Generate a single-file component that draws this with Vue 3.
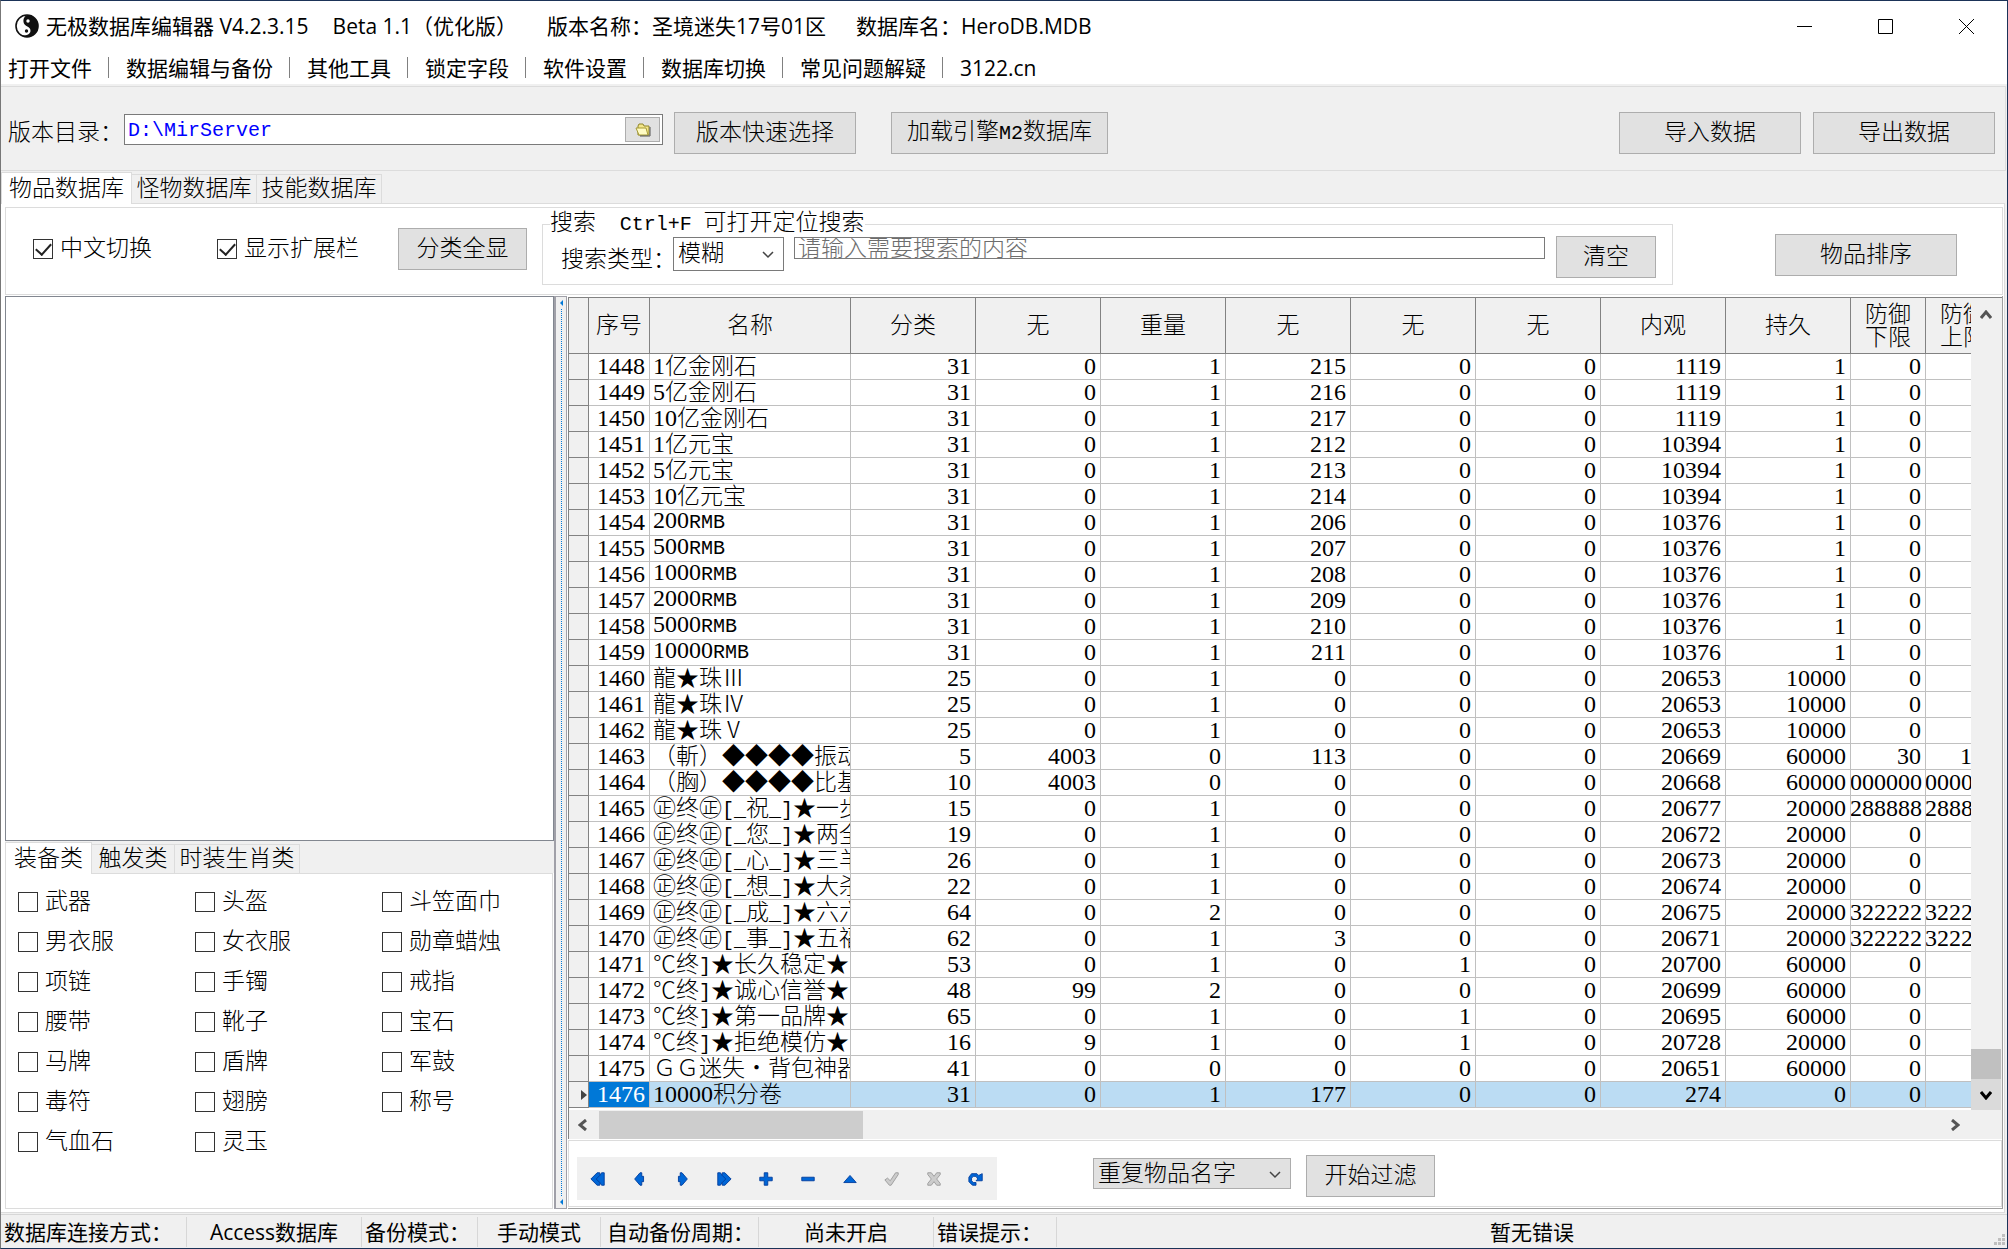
<script setup>
import { ref } from "vue";

const menus = ["打开文件", "数据编辑与备份", "其他工具", "锁定字段", "软件设置", "数据库切换", "常见问题解疑", "3122.cn"];
const mainTabs = ["物品数据库", "怪物数据库", "技能数据库"];
const kindTabs = ["装备类", "触发类", "时装生肖类"];
const kinds = [
  "武器", "头盔", "斗笠面巾",
  "男衣服", "女衣服", "勋章蜡烛",
  "项链", "手镯", "戒指",
  "腰带", "靴子", "宝石",
  "马牌", "盾牌", "军鼓",
  "毒符", "翅膀", "称号",
  "气血石", "灵玉",
];

const columns = ["序号", "名称", "分类", "无", "重量", "无", "无", "无", "内观", "持久", "防御\n下限", "防御\n上限"];

const rows = [
  [1448, "1亿金刚石", 31, 0, 1, 215, 0, 0, 1119, 1, 0, ""],
  [1449, "5亿金刚石", 31, 0, 1, 216, 0, 0, 1119, 1, 0, ""],
  [1450, "10亿金刚石", 31, 0, 1, 217, 0, 0, 1119, 1, 0, ""],
  [1451, "1亿元宝", 31, 0, 1, 212, 0, 0, 10394, 1, 0, ""],
  [1452, "5亿元宝", 31, 0, 1, 213, 0, 0, 10394, 1, 0, ""],
  [1453, "10亿元宝", 31, 0, 1, 214, 0, 0, 10394, 1, 0, ""],
  [1454, "200RMB", 31, 0, 1, 206, 0, 0, 10376, 1, 0, ""],
  [1455, "500RMB", 31, 0, 1, 207, 0, 0, 10376, 1, 0, ""],
  [1456, "1000RMB", 31, 0, 1, 208, 0, 0, 10376, 1, 0, ""],
  [1457, "2000RMB", 31, 0, 1, 209, 0, 0, 10376, 1, 0, ""],
  [1458, "5000RMB", 31, 0, 1, 210, 0, 0, 10376, 1, 0, ""],
  [1459, "10000RMB", 31, 0, 1, 211, 0, 0, 10376, 1, 0, ""],
  [1460, "龍★珠Ⅲ", 25, 0, 1, 0, 0, 0, 20653, 10000, 0, ""],
  [1461, "龍★珠Ⅳ", 25, 0, 1, 0, 0, 0, 20653, 10000, 0, ""],
  [1462, "龍★珠Ⅴ", 25, 0, 1, 0, 0, 0, 20653, 10000, 0, ""],
  [1463, "（斬）◆◆◆◆振动", 5, 4003, 0, 113, 0, 0, 20669, 60000, 30, 100],
  [1464, "（胸）◆◆◆◆比基", 10, 4003, 0, 0, 0, 0, 20668, 60000, 1000000, 1000000],
  [1465, "㊣终㊣[_祝_]★一步", 15, 0, 1, 0, 0, 0, 20677, 20000, 288888, 288888],
  [1466, "㊣终㊣[_您_]★两全", 19, 0, 1, 0, 0, 0, 20672, 20000, 0, ""],
  [1467, "㊣终㊣[_心_]★三羊", 26, 0, 1, 0, 0, 0, 20673, 20000, 0, ""],
  [1468, "㊣终㊣[_想_]★大杀", 22, 0, 1, 0, 0, 0, 20674, 20000, 0, ""],
  [1469, "㊣终㊣[_成_]★六六", 64, 0, 2, 0, 0, 0, 20675, 20000, 322222, 322222],
  [1470, "㊣终㊣[_事_]★五福", 62, 0, 1, 3, 0, 0, 20671, 20000, 322222, 322222],
  [1471, "℃终]★长久稳定★", 53, 0, 1, 0, 1, 0, 20700, 60000, 0, ""],
  [1472, "℃终]★诚心信誉★", 48, 99, 2, 0, 0, 0, 20699, 60000, 0, ""],
  [1473, "℃终]★第一品牌★", 65, 0, 1, 0, 1, 0, 20695, 60000, 0, ""],
  [1474, "℃终]★拒绝模仿★", 16, 9, 1, 0, 1, 0, 20728, 20000, 0, ""],
  [1475, "ＧＧ迷失・背包神器", 41, 0, 0, 0, 0, 0, 20651, 60000, 0, ""],
  [1476, "10000积分卷", 31, 0, 1, 177, 0, 0, 274, 0, 0, ""],
];

const current = ref(1476);
const dir = ref("D:\\MirServer");
const keyword = ref("");
const chinese = ref(true);
const extended = ref(true);
const checked = ref([]);

const navButtons = [
  { name: "首条", d: "M11 2v3l2-3h3v14h-3l-2-3v3H8L1 9l7-7z", line: "M11 5L7 9l4 4" },
  { name: "上一条", d: "M9 2h2v4h2v6h-2v4H9L3 9z" },
  { name: "下一条", d: "M9 2H7v4H5v6h2v4h2l6-7z" },
  { name: "末条", d: "M7 2v3L5 2H2v14h3l2-3v3h3l7-7-7-7z", line: "M7 5l4 4-4 4" },
  { name: "添加", d: "M7 2h4v5h5v4h-5v5H7v-5H2V7h5z" },
  { name: "删除", d: "M2 7h14v4H2z" },
  { name: "编辑", d: "M2 13h14L9 5z" },
  { name: "提交", d: "M1 10l3-2 3 3 6-9h3v2L8 16H6z", off: true },
  { name: "取消", d: "M2 2h4l3 4 3-4h4v2l-4 5 4 5v2h-4l-3-4-3 4H2v-2l4-5-4-5z", off: true },
  { name: "刷新", d: "M9 16H5l-4-4V7l3-4h6l2 2 4-2v8H9l2-2-2-3H6L4 8v3l2 2h3z" },
];

const status = [
  { text: "数据库连接方式：", cls: "w-a" },
  { text: "Access数据库", cls: "w-b center" },
  { text: "备份模式：", cls: "w-c" },
  { text: "手动模式", cls: "w-d center" },
  { text: "自动备份周期：", cls: "w-e" },
  { text: "尚未开启", cls: "w-f center" },
  { text: "错误提示：", cls: "w-g" },
  { text: "暂无错误", cls: "w-h center" },
];

// split a name into digit, latin and wide runs so each gets its own face
function runs(name) {
  return name.match(/[0-9]+|[\x21-\x2f\x3a-\x7e]+|[^\x21-\x7e]+/g).map((text) => ({
    text,
    cls: /[0-9]/.test(text) ? "run-digit" : /[\x21-\x7e]/.test(text) ? "run-latin" : "run-wide",
  }));
}
</script>

<template>
  <div class="window">
    <header class="titlebar">
      <svg class="logo" viewBox="0 0 24 24" aria-hidden="true">
        <circle cx="12" cy="12" r="11" fill="#fff" stroke="#111" stroke-width="1.6" />
        <path d="M12 1a11 11 0 0 1 0 22c-2 0-4-.6-5.600-1.600C10 22 15 21 15.500 17 16 12 9 13 8.500 8 8.200 4 10 2 12 1z" fill="#111" />
        <circle cx="13" cy="7" r="1.700" fill="#fff" />
        <circle cx="11.500" cy="17" r="1.700" fill="#111" />
      </svg>
      <h1 class="title">
        <span>无极数据库编辑器 V4.2.3.15</span>
        <span class="title-beta">Beta 1.1（优化版）</span>
        <span class="title-version">版本名称：圣境迷失17号01区</span>
        <span>数据库名：HeroDB.MDB</span>
      </h1>
      <div class="win-buttons">
        <button type="button" aria-label="最小化"><svg viewBox="0 0 15 15"><path d="M0 7.500h15" /></svg></button>
        <button type="button" aria-label="最大化"><svg viewBox="0 0 15 15"><path d="M.5.5h14v14H.5z" /></svg></button>
        <button type="button" aria-label="关闭"><svg viewBox="0 0 15 15"><path d="M0 0l15 15M15 0L0 15" /></svg></button>
      </div>
    </header>

    <nav class="menubar">
      <template v-for="(m, i) in menus" :key="m">
        <i v-if="i" class="menu-sep"></i>
        <button type="button">{{ m }}</button>
      </template>
    </nav>

    <section class="path-panel">
      <label for="dir">版本目录：</label>
      <div class="dir-box">
        <input id="dir" v-model="dir" type="text">
        <button type="button" class="dir-open" aria-label="浏览">
          <svg viewBox="0 0 16 14">
            <path d="M3 12V3l1-2h4l1 2h5v9z" fill="#f3e68a" stroke="#8f8428" />
            <path d="M1 5h10l2 7H4z" fill="#fffbc4" stroke="#a59a35" />
            <path d="M15 4v9H5" fill="none" stroke="#555" />
          </svg>
        </button>
      </div>
      <button type="button" class="btn btn-wide">版本快速选择</button>
      <button type="button" class="btn btn-load">加载引擎<span class="run-latin">M2</span>数据库</button>
      <button type="button" class="btn btn-wide push">导入数据</button>
      <button type="button" class="btn btn-wide btn-export">导出数据</button>
    </section>

    <div class="tabs main-tabs" role="tablist">
      <button v-for="(t, i) in mainTabs" :key="t" type="button" role="tab" :class="{ active: i === 0 }">{{ t }}</button>
    </div>

    <main class="page">
      <section class="toolbar">
        <label class="check check-first"><input v-model="chinese" type="checkbox">中文切换</label>
        <label class="check check-second"><input v-model="extended" type="checkbox">显示扩展栏</label>
        <button type="button" class="btn btn-all">分类全显</button>
        <fieldset class="search">
          <legend>搜索 <span class="hotkey">Ctrl+F</span> 可打开定位搜索</legend>
          <div class="search-row">
            <label for="mode">搜索类型：</label>
            <div class="select mode">
              <select id="mode"><option>模糊</option></select>
              <svg viewBox="0 0 12 8"><path d="M1 1l5 5 5-5" /></svg>
            </div>
            <input v-model="keyword" class="keyword" type="text" aria-label="搜索内容" placeholder="请输入需要搜索的内容">
            <button type="button" class="btn btn-clear">清空</button>
          </div>
        </fieldset>
        <button type="button" class="btn btn-wide btn-sort">物品排序</button>
      </section>

      <div class="split">
        <aside class="left">
          <div class="list"></div>
          <div class="tabs kind-tabs" role="tablist">
            <button v-for="(t, i) in kindTabs" :key="t" type="button" role="tab" :class="{ active: i === 0 }">{{ t }}</button>
          </div>
          <div class="kinds">
            <label v-for="k in kinds" :key="k" class="check">
              <input v-model="checked" type="checkbox" :value="k">{{ k }}
            </label>
          </div>
        </aside>

        <div class="splitter">
          <i class="split-arrow"></i>
          <i class="split-dots"></i>
          <i class="split-arrow"></i>
        </div>

        <section class="right">
          <div class="grid">
            <div class="grid-view">
              <table>
                <colgroup>
                  <col class="c-mark"><col class="c-id"><col class="c-name">
                  <col v-for="n in 8" :key="n" class="c-num">
                  <col class="c-def"><col class="c-def">
                </colgroup>
                <thead>
                  <tr>
                    <th></th>
                    <th v-for="(c, i) in columns" :key="i">{{ c }}</th>
                  </tr>
                </thead>
                <tbody>
                  <tr v-for="r in rows" :key="r[0]" :class="{ current: r[0] === current }" @click="current = r[0]">
                    <td class="mark"><i v-if="r[0] === current"></i></td>
                    <td class="num id">{{ r[0] }}</td>
                    <td><div class="name"><span v-for="(s, i) in runs(r[1])" :key="i" :class="s.cls">{{ s.text }}</span></div></td>
                    <td v-for="(v, i) in r.slice(2)" :key="i" class="num">{{ v }}</td>
                  </tr>
                </tbody>
              </table>
            </div>
            <div class="vscroll">
              <svg class="arrow up" viewBox="0 0 12 10"><path d="M1 8l5-6 5 6" /></svg>
              <i class="vthumb"></i>
              <div class="vdown"><svg class="arrow dark" viewBox="0 0 12 10"><path d="M1 2l5 6 5-6" /></svg></div>
            </div>
            <div class="hscroll">
              <svg class="arrow side" viewBox="0 0 10 12"><path d="M8 1L2 6l6 5" /></svg>
              <i class="hthumb"></i>
              <svg class="arrow side end" viewBox="0 0 10 12"><path d="M2 1l6 5-6 5" /></svg>
            </div>
          </div>

          <div class="footer-box">
            <div class="navigator">
              <button v-for="b in navButtons" :key="b.name" type="button" :disabled="b.off" :aria-label="b.name">
                <svg viewBox="0 0 18 18">
                  <path :d="b.d" />
                  <path v-if="b.line" class="nav-line" :d="b.line" />
                </svg>
              </button>
            </div>
            <div class="select filter">
              <select aria-label="过滤条件"><option>重复物品名字</option></select>
              <svg viewBox="0 0 12 8"><path d="M1 1l5 5 5-5" /></svg>
            </div>
            <button type="button" class="btn btn-all">开始过滤</button>
          </div>
        </section>
      </div>
    </main>

    <footer class="statusbar">
      <span v-for="s in status" :key="s.text" :class="s.cls">{{ s.text }}</span>
      <svg class="grip" viewBox="0 0 12 12"><path d="M8 0h3v3H8zM4 4h3v3H4zM8 4h3v3H8zM0 8h3v3H0zM4 8h3v3H4zM8 8h3v3H8z" /></svg>
    </footer>
  </div>
</template>

<style>
body {
  margin: 0;
}
</style>

<style scoped>
.window,
.window * {
  box-sizing: border-box;
}

.window {
  display: flex;
  flex-direction: column;
  min-height: 100vh;
  border: 1px solid #1b3358;
  border-left-color: #777;
  background: #f0f0f0;
  color: #000;
  font-family: "Liberation Serif", "Noto Sans CJK SC", serif;
  font-size: 23px;
  font-weight: 300;
  line-height: 26px;
  white-space: nowrap;
}

button,
input,
select {
  margin: 0;
  padding: 0;
  border: 0;
  border-radius: 0;
  background: none;
  color: inherit;
  font: inherit;
}

.titlebar {
  display: flex;
  align-items: center;
  height: 50px;
  padding-left: 14px;
  background: #fff;
  font-family: "Open Sans", "Noto Sans CJK SC", sans-serif;
  font-size: 21px;
  font-weight: 400;
}

.logo {
  width: 24px;
  height: 24px;
  margin-right: 7px;
}

.title {
  display: flex;
  margin: 0;
  font-size: 21px;
  font-weight: 400;
}

.title-beta {
  margin-left: 24px;
}

.title-version {
  margin: 0 30px;
}

.win-buttons {
  display: flex;
  margin-left: auto;
}

.win-buttons button {
  display: flex;
  align-items: center;
  justify-content: center;
  width: 81px;
  height: 50px;
}

.win-buttons svg {
  width: 15px;
  height: 15px;
  fill: none;
  stroke: #000;
}

.menubar {
  display: flex;
  align-items: center;
  gap: 16px;
  height: 33px;
  padding-left: 7px;
  background: #fff;
  font-family: "Open Sans", "Noto Sans CJK SC", sans-serif;
  font-size: 21px;
  font-weight: 400;
}

.menu-sep {
  width: 2px;
  height: 21px;
  border-left: 1px solid #808080;
}

.path-panel {
  display: flex;
  align-items: center;
  height: 85px;
  margin: 2px 1px 0 0;
  padding: 8px 0 0 7px;
  border: 1px solid #dcdcdc;
  border-left: 0;
}

.dir-box {
  display: flex;
  align-items: center;
  width: 539px;
  height: 31px;
  margin: 0 11px 6px 1px;
  border: 1px solid #7a7a7a;
  background: #fff;
}

.dir-box input {
  flex: 1;
  min-width: 0;
  padding: 2px 0 0 3px;
  color: #00f;
  font-family: "Liberation Mono", monospace;
  font-size: 20px;
}

.dir-open {
  display: flex;
  align-items: center;
  justify-content: center;
  width: 35px;
  height: 25px;
  margin-right: 2px;
  border: 1px solid #adadad;
  background: #e1e1e1;
}

.dir-open svg {
  width: 16px;
  height: 14px;
}

.btn {
  height: 42px;
  border: 1px solid #adadad;
  background: #e1e1e1;
  text-align: center;
}

.btn-wide {
  width: 182px;
}

.btn-load {
  width: 217px;
  margin-left: 35px;
}

.push {
  margin-left: auto;
}

.btn-export {
  margin: 0 10px 0 12px;
}

.tabs {
  display: flex;
  align-items: flex-end;
}

.tabs button {
  height: 29px;
  border: 1px solid #dcdcdc;
  border-width: 1px 1px 0 0;
}

.tabs .active {
  position: relative;
  height: 32px;
  margin-bottom: -1px;
  border-left-width: 1px;
  background: #fff;
}

.main-tabs {
  height: 32px;
}

.main-tabs button {
  width: 125px;
}

.main-tabs .active {
  width: 131px;
}

.page {
  display: flex;
  flex: 1;
  flex-direction: column;
  margin-right: 2px;
  padding: 3px 1px 3px 4px;
  border: 1px solid #dcdcdc;
  border-left: 0;
  background: #fff;
}

.toolbar {
  display: flex;
  align-items: center;
  height: 88px;
  padding: 0 45px 5px 27px;
  border: 1px solid #dcdcdc;
}

.check {
  display: flex;
  align-items: center;
}

.check input {
  width: 20px;
  height: 20px;
  margin-right: 7px;
  border: 1px solid #333;
  background: #fff;
  appearance: none;
}

.check input:checked::before {
  display: block;
  width: 13px;
  height: 7px;
  margin: 3px 0 0 2px;
  border: solid #222;
  border-width: 0 0 2px 2px;
  content: "";
  transform: rotate(-48deg);
}

.check-first {
  width: 184px;
}

.check-second {
  width: 181px;
}

.btn-all {
  width: 129px;
}

.search {
  flex: 1;
  min-width: 0;
  height: 73px;
  margin: 0 102px 0 15px;
  padding: 0 16px 0 18px;
  border: 1px solid #dcdcdc;
}

.search legend {
  margin-left: -11px;
  padding: 0;
  line-height: 22px;
}

.hotkey {
  margin: 0 6px 0 18px;
  font-family: "Liberation Mono", monospace;
  font-size: 20px;
}

.search-row {
  display: flex;
  align-items: flex-start;
}

.search-row label {
  padding-top: 11px;
}

.select {
  position: relative;
  border: 1px solid #7a7a7a;
}

.select select {
  width: 100%;
  height: 100%;
  padding-left: 4px;
  appearance: none;
}

.select svg {
  position: absolute;
  top: 50%;
  right: 9px;
  width: 12px;
  height: 8px;
  margin-top: -3px;
  fill: none;
  stroke: #444;
  stroke-width: 1.5;
  pointer-events: none;
}

.mode {
  width: 111px;
  height: 34px;
  margin: 1px 10px 0 -3px;
}

.keyword {
  flex: 1;
  min-width: 0;
  height: 22px;
  margin: 1px 11px 0 0;
  padding: 2px 0 0 3px;
  border: 1px solid #7a7a7a;
}

.keyword::placeholder {
  color: #6d6d6d;
}

.btn-clear {
  width: 100px;
}

.btn-sort {
  margin-top: 12px;
}

.split {
  display: flex;
  flex: 1;
  padding-top: 1px;
}

.left {
  display: flex;
  flex-direction: column;
  width: 549px;
}

.list {
  flex: 1;
  border: 1px solid #828790;
}

.kind-tabs {
  height: 32px;
  background: #f0f0f0;
}

.kind-tabs button {
  width: 125px;
}

.kind-tabs .active {
  width: 87px;
}

.kind-tabs .active + button {
  width: 83px;
}

.kinds {
  display: grid;
  grid-template-columns: 177px 187px auto;
  grid-auto-rows: 40px;
  height: 336px;
  margin-right: 1px;
  padding: 8px 0 0 12px;
  border: 1px solid #dcdcdc;
}

.splitter {
  display: flex;
  flex-direction: column;
  align-items: center;
  width: 13px;
  padding: 3px 0;
  border: 1px solid #a0a0a8;
  border-left-width: 2px;
  background: #f0f0f0;
}

.split-arrow {
  border: solid transparent;
  border-width: 3px 3px 3px 0;
  border-right-color: #0078d7;
}

.split-dots {
  flex: 1;
  margin: 3px 0;
  border-left: 1px dotted #0078d7;
}

.right {
  display: flex;
  flex: 1;
  flex-direction: column;
  min-width: 0;
  margin-left: 1px;
  border-right: 1px solid #a0a0a0;
  border-bottom: 1px solid #a0a0a0;
}

.grid {
  display: grid;
  grid-template-columns: minmax(0, 1fr) 31px;
  margin-top: 1px;
  border: solid #828282;
  border-width: 1px 0 0 1px;
}

.grid-view {
  overflow: hidden;
  padding-bottom: 2px;
}

table {
  width: 1432px;
  border-spacing: 0;
  table-layout: fixed;
}

.c-mark {
  width: 20px;
}

.c-id {
  width: 61px;
}

.c-name {
  width: 201px;
}

.c-num {
  width: 125px;
}

.c-def {
  width: 75px;
}

th {
  height: 56px;
  padding: 0;
  border: solid #828282;
  border-width: 0 1px 1px 0;
  background: #f0f0f0;
  font-weight: inherit;
  line-height: 23px;
  white-space: pre;
}

td {
  height: 26px;
  padding: 0 4px 0 3px;
  border: solid #c0c0c0;
  border-width: 0 1px 1px 0;
  overflow: hidden;
  line-height: 25px;
}

.mark {
  padding: 0;
  border-color: #828282;
  background: #f0f0f0;
}

.mark i {
  display: block;
  width: 0;
  margin-left: 12px;
  border: solid transparent;
  border-width: 5px 0 5px 6px;
  border-left-color: #444;
}

.num {
  direction: rtl;
  font-size: 24px;
  line-height: 25px;
}

.name {
  height: 25px;
  margin-right: -4px;
  overflow: hidden;
  line-height: 21px;
}

.run-wide {
  font-family: "Noto Sans CJK SC", sans-serif;
}

.run-digit {
  font-size: 24px;
}

.run-latin {
  font-family: "Liberation Mono", monospace;
  font-size: 20px;
}

.current td {
  background: #bbdcf3;
}

.current .mark {
  background: #f0f0f0;
}

.current .id {
  background: #0078d7;
  color: #fff;
}

.vscroll {
  display: flex;
  flex-direction: column;
  align-items: center;
  padding: 12px 1px 0 0;
  background: #f0f0f0;
}

.arrow {
  width: 12px;
  height: 10px;
  fill: none;
  stroke: #555;
  stroke-width: 3;
}

.dark {
  stroke: #000;
}

.vthumb {
  width: 30px;
  height: 30px;
  margin-top: auto;
  background: #c0c0c0;
}

.vdown {
  display: flex;
  align-items: center;
  justify-content: center;
  width: 30px;
  height: 31px;
  background: #dadada;
}

.hscroll {
  display: flex;
  grid-column: 1 / -1;
  align-items: center;
  height: 29px;
  padding: 0 42px 0 9px;
  background: #f0f0f0;
}

.side {
  width: 10px;
  height: 12px;
}

.hthumb {
  width: 264px;
  height: 28px;
  margin-left: 11px;
  background: #cdcdcd;
}

.end {
  margin-left: auto;
}

.footer-box {
  display: flex;
  flex: 1;
  align-items: flex-start;
  margin: 1px 0;
  padding: 14px 8px 0;
  border: 1px solid #dcdcdc;
}

.navigator {
  display: flex;
  margin-top: 2px;
  background: #f0f0f0;
}

.navigator button {
  display: flex;
  align-items: center;
  justify-content: center;
  width: 42px;
  height: 43px;
}

.navigator svg {
  width: 16px;
  height: 16px;
  fill: #0066d6;
  stroke: #003c9c;
}

.navigator .nav-line {
  fill: none;
}

.navigator button:disabled svg {
  fill: #ccc;
  stroke: #9a9a9a;
}

.filter {
  width: 198px;
  height: 31px;
  margin: 3px 15px 0 96px;
  border-color: #adadad;
  background: #e1e1e1;
}

.statusbar {
  display: flex;
  position: relative;
  align-items: center;
  height: 34px;
  margin-top: 1px;
  border-top: 1px solid #d7d7d7;
  font-family: "Open Sans", "Noto Sans CJK SC", sans-serif;
  font-size: 21px;
  font-weight: 400;
}

.statusbar span {
  height: 30px;
  padding-left: 3px;
  border-right: 1px solid #d7d7d7;
  line-height: 30px;
}

.statusbar .center {
  padding: 0;
  text-align: center;
}

.w-a {
  width: 186px;
}

.w-b {
  width: 175px;
}

.w-c {
  width: 116px;
}

.w-d {
  width: 123px;
}

.statusbar .w-e {
  width: 158px;
  padding-left: 6px;
}

.w-f {
  width: 175px;
}

.w-g {
  width: 123px;
}

.statusbar .w-h {
  flex: 1;
  border: 0;
}

.grip {
  position: absolute;
  right: 1px;
  bottom: 2px;
  width: 12px;
  height: 12px;
  fill: #bfbfbf;
}
</style>
